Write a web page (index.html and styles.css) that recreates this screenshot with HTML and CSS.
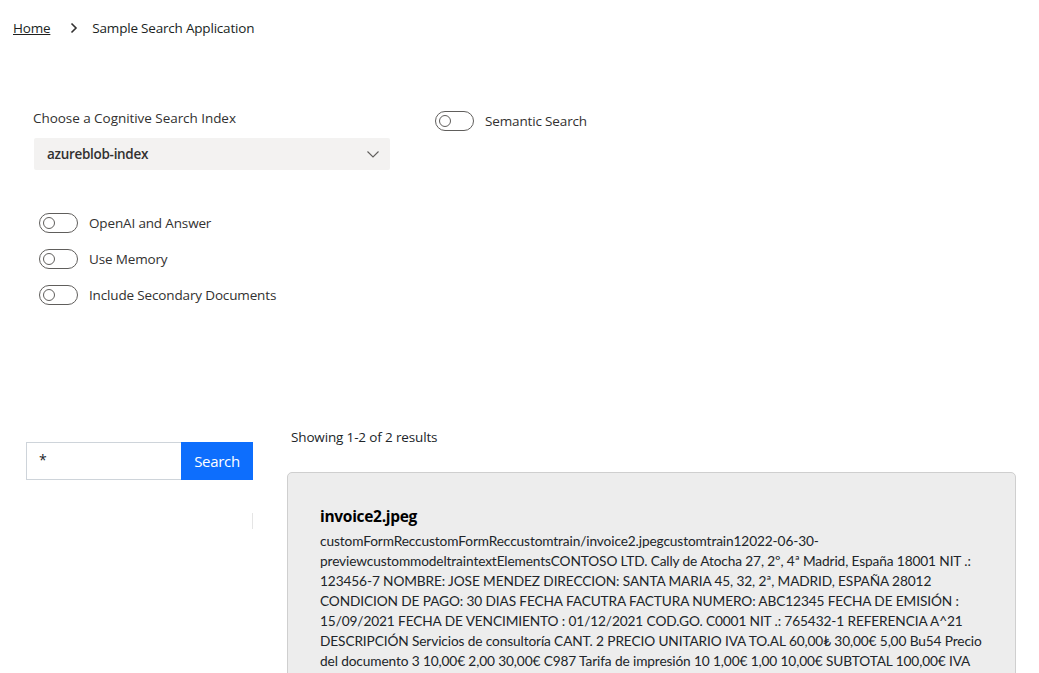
FILE: index.html
```html
<!DOCTYPE html>
<html>
<head>
<meta charset="utf-8">
<link rel="stylesheet" href="styles.css">
</head>
<body>
<nav class="crumbs">
  <a class="crumb-link" href="#">Home</a>
  <svg class="crumb-sep" width="12" height="12" viewBox="0 0 12 12"><path d="M3.5 1.5 L8 6 L3.5 10.5" fill="none" stroke="#323130" stroke-width="1.6"/></svg>
  <span class="crumb-current">Sample Search Application</span>
</nav>

<section class="settings">
  <div class="top-row">
    <div class="index-field">
      <label class="field-label">Choose a Cognitive Search Index</label>
      <div class="dropdown">
        <span class="dropdown-value">azureblob-index</span>
        <svg class="dropdown-chev" width="14" height="14" viewBox="0 0 14 14"><path d="M1.5 4.5 L7 10 L12.5 4.5" fill="none" stroke="#605e5c" stroke-width="1.1"/></svg>
      </div>
    </div>
    <div class="toggle-row semantic">
      <span class="toggle"><span class="knob"></span></span>
      <span class="toggle-label">Semantic Search</span>
    </div>
  </div>

  <div class="toggles">
    <div class="toggle-row">
      <span class="toggle"><span class="knob"></span></span>
      <span class="toggle-label">OpenAI and Answer</span>
    </div>
    <div class="toggle-row">
      <span class="toggle"><span class="knob"></span></span>
      <span class="toggle-label">Use Memory</span>
    </div>
    <div class="toggle-row">
      <span class="toggle"><span class="knob"></span></span>
      <span class="toggle-label">Include Secondary Documents</span>
    </div>
  </div>
</section>

<section class="results-area">
  <aside class="sidebar">
    <div class="search-box">
      <input class="search-input" type="text" value="*">
      <button class="search-btn">Search</button>
    </div>
    <div class="side-divider"></div>
  </aside>
  <main class="results">
    <div class="count">Showing 1-2 of 2 results</div>
    <div class="card">
      <h3 class="card-title">invoice2.jpeg</h3>
      <p class="card-body">customFormReccustomFormReccustomtrain/invoice2.jpegcustomtrain12022-06-30-previewcustommodeltraintextElementsCONTOSO LTD. Cally de Atocha 27, 2º, 4ª Madrid, España 18001 NIT .: 123456-7 NOMBRE: JOSE MENDEZ DIRECCION: SANTA MARIA 45, 32, 2ª, MADRID, ESPAÑA 28012 CONDICION DE PAGO: 30 DIAS FECHA FACUTRA FACTURA NUMERO: ABC12345 FECHA DE EMISIÓN : 15/09/2021 FECHA DE VENCIMIENTO : 01/12/2021 COD.GO. C0001 NIT .: 765432-1 REFERENCIA A^21 DESCRIPCIÓN Servicios de consultoría CANT. 2 PRECIO UNITARIO IVA TO.AL 60,00₺ 30,00€ 5,00 Bu54 Precio del documento 3 10,00€ 2,00 30,00€ C987 Tarifa de impresión 10 1,00€ 1,00 10,00€ SUBTOTAL 100,00€ IVA 21,00€ TOTAL 121,00€</p>
    </div>
  </main>
</section>
</body>
</html>
```

FILE: styles.css
```css
* { box-sizing: border-box; }
html, body { margin: 0; padding: 0; }
body {
  font-family: "Open Sans", "Noto Sans", sans-serif;
  color: #323130;
  background: #fff;
  width: 1039px;
  height: 673px;
  overflow: hidden;
}

.crumbs {
  display: flex;
  align-items: center;
  height: 20px;
  margin: 18px 0 0 13px;
  font-size: 13.5px;
  letter-spacing: -0.2px;
}
.crumb-link { color: #201f1e; text-decoration: underline; }
.crumb-sep { margin: 0 12px 0 18px; }
.crumb-current { color: #201f1e; }

.settings { padding: 0 0 0 33px; }
.top-row {
  display: flex;
  gap: 45px;
  margin-top: 71px;
}
.index-field { width: 357px; }
.field-label {
  display: block;
  font-size: 13.5px;
  letter-spacing: -0.05px;
  color: #323130;
  line-height: 18px;
  margin-bottom: 11px;
}
.dropdown {
  height: 32px;
  background: #f3f2f1;
  border-radius: 2px;
  margin-left: 1px;
  display: flex;
  align-items: center;
  justify-content: space-between;
  padding: 0 10px 0 13px;
}
.dropdown-value { font-weight: 600; font-size: 13.5px; letter-spacing: -0.3px; color: #323130; }

.toggle-row {
  display: flex;
  align-items: center;
  height: 20px;
}
.toggle-row.semantic { margin-top: 2px; }
.toggle {
  width: 39px;
  height: 20px;
  border: 1px solid #605e5c;
  border-radius: 10px;
  display: flex;
  align-items: center;
  padding-left: 3px;
  flex-shrink: 0;
}
.knob {
  width: 12px;
  height: 12px;
  border: 1px solid #605e5c;
  border-radius: 50%;
}
.toggle-label {
  margin-left: 11px;
  font-size: 13.5px;
  letter-spacing: -0.15px;
  color: #323130;
}

.toggles {
  display: flex;
  flex-direction: column;
  gap: 16px;
  margin: 43px 0 0 6px;
}

.results-area {
  display: flex;
  margin-top: 123px;
}
.sidebar { width: 261px; padding-left: 26px; padding-top: 14px; }
.search-box { display: flex; height: 38px; }
.search-input {
  width: 155px;
  height: 38px;
  border: 1px solid #ced4da;
  border-right: none;
  font-family: inherit;
  font-size: 14px;
  padding: 0 12px 3px;
  color: #212529;
  outline: none;
}
.search-btn {
  width: 72px;
  height: 38px;
  border: none;
  background: #0d6efd;
  color: #fff;
  font-family: inherit;
  font-size: 15px;
  letter-spacing: -0.3px;
  padding: 0;
}
.side-divider {
  width: 1px;
  height: 16px;
  background: #e5e5e5;
  margin: 33px 0 0 226px;
}

.results { flex: 1; padding-left: 26px; padding-right: 23px; }
.count {
  font-size: 13.5px;
  letter-spacing: -0.15px;
  color: #212529;
  line-height: 18px;
  margin: 0 0 26px 4px;
}
.card {
  background: #ededed;
  border: 1px solid #cfcfcf;
  border-radius: 5px;
  padding: 32px 28px 20px 32px;
  height: 260px;
}
.card-title {
  margin: 0 0 4px 0;
  font-size: 15.5px;
  font-weight: 700;
  letter-spacing: -0.3px;
  color: #000;
  line-height: 22px;
}
.card-body {
  margin: 0;
  font-family: "Lato", "Open Sans", sans-serif;
  font-size: 13.7px;
  line-height: 20px;
  letter-spacing: -0.12px;
  color: #212529;
}
```
